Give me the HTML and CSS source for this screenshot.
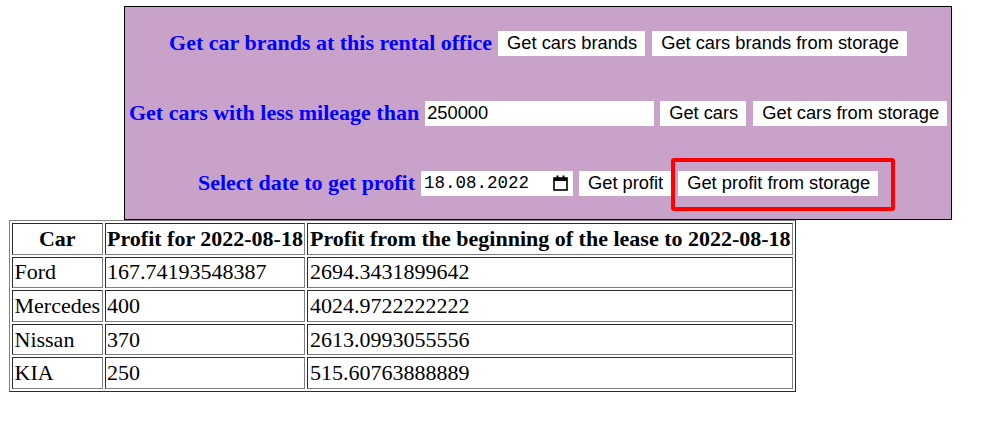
FILE: index.html
```html
<!DOCTYPE html>
<html>
<head>
<meta charset="utf-8">
<link rel="stylesheet" href="styles.css">
</head>
<body>
<div class="panel">
  <div class="row">
    <span class="label">Get car brands at this rental office</span>
    <button class="btn">Get cars brands</button>
    <button class="btn">Get cars brands from storage</button>
  </div>
  <div class="row">
    <span class="label">Get cars with less mileage than</span>
    <input class="num" type="text" value="250000">
    <button class="btn">Get cars</button>
    <button class="btn">Get cars from storage</button>
  </div>
  <div class="row">
    <span class="label">Select date to get profit</span>
    <span class="date">
      <input class="date-text" type="text" value="18.08.2022">
      <svg class="cal" width="15" height="16" viewBox="0 0 15 16">
        <rect x="1" y="3" width="13" height="12" fill="none" stroke="#000" stroke-width="1.6"/>
        <rect x="1" y="3" width="13" height="3" fill="#000"/>
        <rect x="3.5" y="0.5" width="2" height="3" fill="#000"/>
        <rect x="9.5" y="0.5" width="2" height="3" fill="#000"/>
      </svg>
    </span>
    <button class="btn">Get profit</button>
    <span class="highlight"><button class="btn">Get profit from storage</button></span>
  </div>
</div>
<table class="profit" border="1">
  <tr><th>Car</th><th>Profit for 2022-08-18</th><th>Profit from the beginning of the lease to 2022-08-18</th></tr>
  <tr><td>Ford</td><td>167.74193548387</td><td>2694.3431899642</td></tr>
  <tr><td>Mercedes</td><td>400</td><td>4024.9722222222</td></tr>
  <tr><td>Nissan</td><td>370</td><td>2613.0993055556</td></tr>
  <tr><td>KIA</td><td>250</td><td>515.60763888889</td></tr>
</table>
</body>
</html>
```
FILE: styles.css
```css
html, body {
  margin: 0;
  padding: 0;
  background: #fff;
}
body {
  font-family: "Liberation Serif", "Times New Roman", serif;
}
.panel {
  margin: 6px 0 0 124px;
  width: 826px;
  border: 1px solid #000;
  background: #c8a2c8;
  padding: 1px 0;
}
.row {
  height: 70px;
  display: flex;
  align-items: center;
  justify-content: center;
  gap: 6px;
}
.label {
  font-weight: bold;
  font-size: 22px;
  color: #0000ff;
}
.btn {
  font-family: "Liberation Sans", Arial, sans-serif;
  font-size: 18.3px;
  background: #fff;
  color: #000;
  border: none;
  height: 25px;
  padding: 0 8px 0 9px;
  margin: 0;
}
.btn + .btn {
  margin-left: 1px;
}
.num {
  font-family: "Liberation Sans", Arial, sans-serif;
  font-size: 18.3px;
  width: 229px;
  height: 25px;
  box-sizing: border-box;
  border: none;
  padding: 0 2px;
  margin: 0;
  outline: none;
}
.date {
  display: flex;
  align-items: center;
  background: #fff;
  width: 152px;
  height: 25px;
  box-sizing: border-box;
  padding: 0 5px 0 3px;
}
.date-text {
  font-family: "Liberation Mono", "Courier New", monospace;
  font-size: 17.5px;
  border: none;
  padding: 0;
  margin: 0;
  width: 125px;
  background: transparent;
  outline: none;
}
.cal {
  margin-left: auto;
}
.highlight {
  position: relative;
  display: inline-flex;
  margin-left: 1px;
}
.highlight::after {
  content: "";
  position: absolute;
  left: -7px;
  right: -17px;
  top: -13px;
  bottom: -15px;
  border: 4px solid #f00;
  border-radius: 3px;
}
.profit {
  margin: 0 0 0 9px;
  border-spacing: 2px;
  font-size: 22px;
}
.profit th, .profit td {
  padding: 1px 1.5px;
  height: 27.6px;
}
.profit th {
  font-weight: bold;
}
.profit td {
  text-align: left;
}
```
